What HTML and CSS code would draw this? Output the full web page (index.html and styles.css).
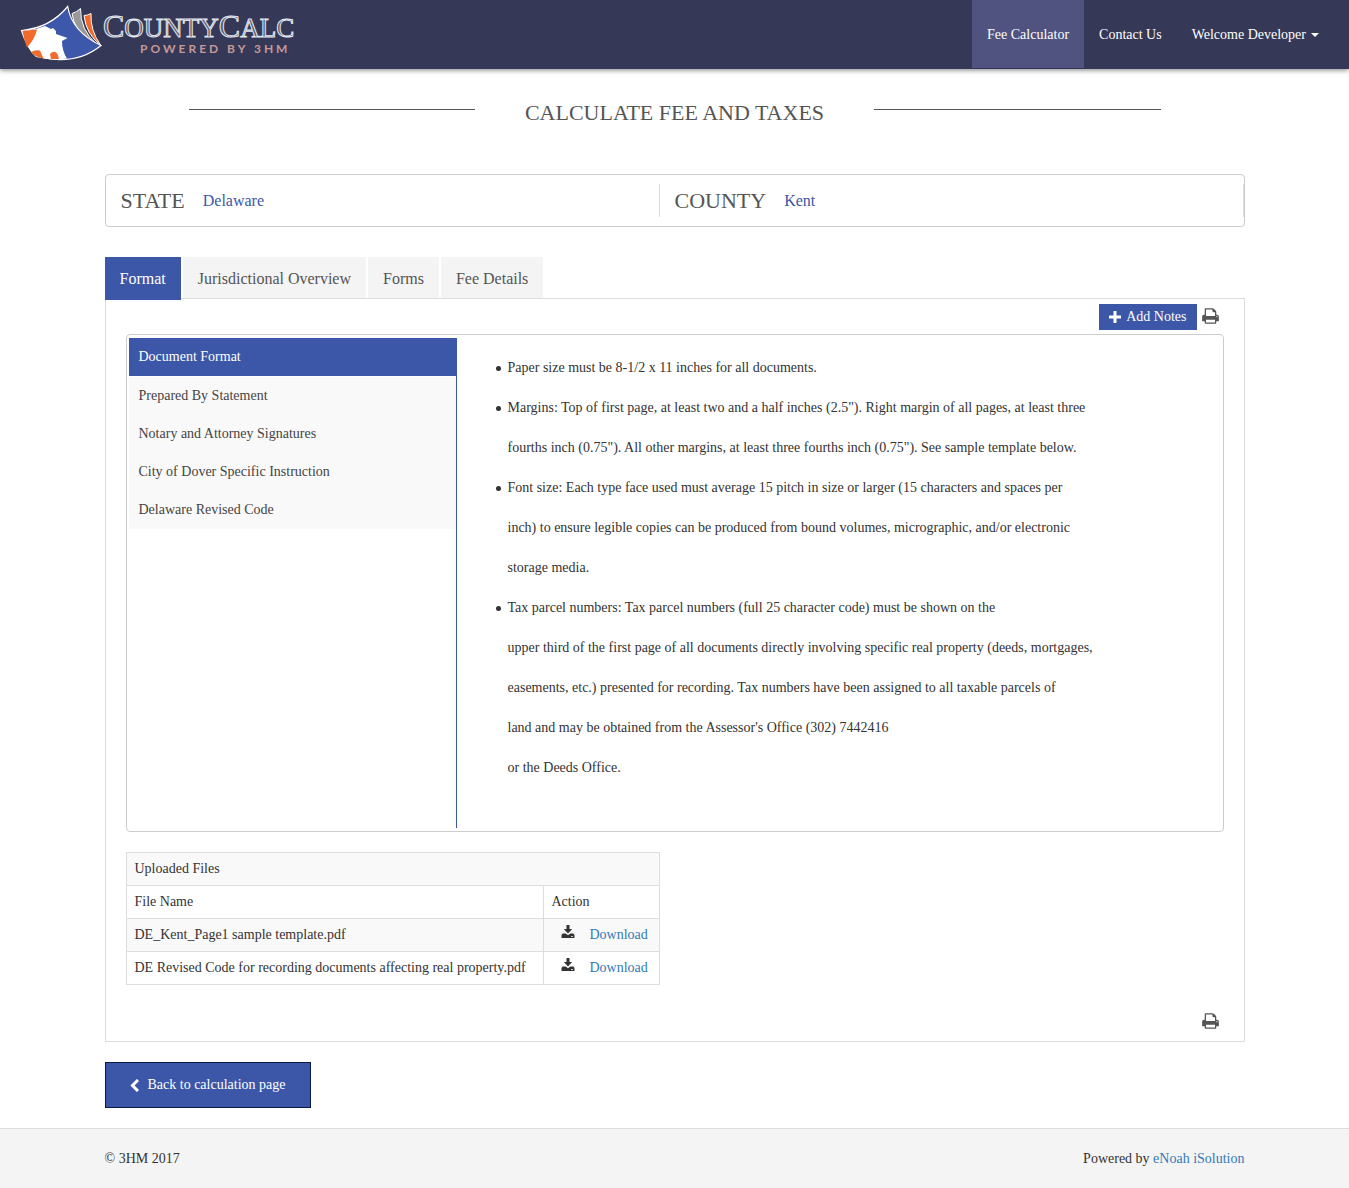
FILE: index.html
```html
<!DOCTYPE html>
<html lang="en">
<head>
<meta charset="utf-8">
<meta name="viewport" content="width=device-width, initial-scale=1">
<title>CountyCalc - Calculate Fee and Taxes</title>
<link rel="stylesheet" href="styles.css">
</head>
<body>
<svg class="sprite" aria-hidden="true">
  <symbol id="print" viewBox="0 0 1664 1792"><path d="M384 1536h896v-256h-896v256zM384 896h896v-384h-160q-40 0-68-28t-28-68v-160h-640v640zM1536 960q0-26-19-45t-45-19-45 19-19 45 19 45 45 19 45-19 19-45zM1664 960v416q0 13-9.500 22.500t-22.500 9.500h-224v160q0 40-28 68t-68 28h-960q-40 0-68-28t-28-68v-160h-224q-13 0-22.500-9.500t-9.500-22.500v-416q0-79 56.500-135.500t135.500-56.500h64v-544q0-40 28-68t68-28h672q40 0 88 20t76 48l152 152q28 28 48 76t20 88v256h64q79 0 135.500 56.500t56.500 135.500z"/></symbol>
  <symbol id="download" viewBox="0 0 14 14"><path d="M5.500 0h3v4h2.700L7 8.400 2.800 4h2.700zM1.700 8.500h3L7 10.200 9.300 8.500h3L13.500 10v3H.5v-3zM10 11v.8h2V11z" fill-rule="evenodd"/></symbol>
</svg>
<header class="navbar">
  <a class="brand" href="#" aria-label="CountyCalc powered by 3HM">
    <svg class="logo" viewBox="12 0 284 68" role="img" aria-label="CountyCalc">
      <path d="M84 15.500Q87.500 15.500 91 13.500Q90 30 100.500 45Q86 34 84 15.500z" fill="#f26a2c" stroke="#fff"/>
      <path d="M72 13.500Q77 12 80.500 8.500Q80 30 97 44.500L90 41Q74 30 72 13.500z" fill="#999" stroke="#fff"/>
      <path d="M21.500 30.500Q50 28 67.700 6.500Q72 32 101 45.500Q82 61 56 59.500Q30 59 21.500 30.500z" fill="#3d57aa" stroke="#fff" stroke-width="1.200"/>
      <path d="M36 29L45 26L51 29L53 28L56 31V34L67.500 38L62 41Q62 51 67 58.500Q50 61 36 57Q27 50 22 31z" fill="#fff"/>
      <path d="M22.500 31L37 29.500Q35 39 27 47.500Q24 40 22.500 31zM31 52Q35 49.500 40 50.500L43.500 58.500Q35 57 31 52zM50 54Q55 49 58 55L59 59H51z" fill="#f26a2c"/>
      <g class="wordmark"><text x="103" y="37"><tspan class="cap">C</tspan>OUNTY<tspan class="cap">C</tspan>ALC</text></g>
      <text class="tagline" x="140" y="53">POWERED BY 3HM</text>
    </svg>
  </a>
  <nav class="menu">
    <a class="active" href="#">Fee Calculator</a>
    <a href="#">Contact Us</a>
    <a href="#">Welcome Developer<span class="caret"></span></a>
  </nav>
</header>

<main class="container">
  <h1 class="title"><span>CALCULATE FEE AND TAXES</span></h1>

  <section class="place">
    <div class="place-item"><span class="place-label">STATE</span><span class="place-value">Delaware</span></div>
    <div class="place-item"><span class="place-label">COUNTY</span><span class="place-value">Kent</span></div>
  </section>

  <nav class="tabs">
    <a class="active" href="#">Format</a>
    <a href="#">Jurisdictional Overview</a>
    <a href="#">Forms</a>
    <a href="#">Fee Details</a>
  </nav>

  <section class="panel">
    <div class="tools">
      <button class="add" type="button"><svg class="plus" viewBox="0 0 12 12" aria-hidden="true"><path d="M4.500 0h3v4.500H12v3H7.500V12h-3V7.500H0v-3h4.500z"/></svg>Add Notes</button>
      <button class="print" type="button" aria-label="Print"><svg><use href="#print"/></svg></button>
    </div>

    <div class="sheet">
      <nav class="side">
        <a class="active" href="#">Document Format</a>
        <a href="#">Prepared By Statement</a>
        <a href="#">Notary and Attorney Signatures</a>
        <a href="#">City of Dover Specific Instruction</a>
        <a href="#">Delaware Revised Code</a>
      </nav>
      <ul class="rules">
        <li>Paper size must be 8-1/2 x 11 inches for all documents.</li>
        <li>Margins: Top of first page, at least two and a half inches (2.5"). Right margin of all pages, at least three<br>fourths inch (0.75"). All other margins, at least three fourths inch (0.75"). See sample template below.</li>
        <li>Font size: Each type face used must average 15 pitch in size or larger (15 characters and spaces per<br>inch) to ensure legible copies can be produced from bound volumes, micrographic, and/or electronic<br>storage media.</li>
        <li>Tax parcel numbers: Tax parcel numbers (full 25 character code) must be shown on the<br>upper third of the first page of all documents directly involving specific real property (deeds, mortgages,<br>easements, etc.) presented for recording. Tax numbers have been assigned to all taxable parcels of<br>land and may be obtained from the Assessor's Office (302) 7442416<br>or the Deeds Office.</li>
      </ul>
    </div>

    <table class="files">
      <thead>
        <tr><th colspan="2">Uploaded Files</th></tr>
        <tr><th>File Name</th><th>Action</th></tr>
      </thead>
      <tbody>
        <tr><td>DE_Kent_Page1 sample template.pdf</td><td class="action"><svg><use href="#download"/></svg><a href="#">Download</a></td></tr>
        <tr><td>DE Revised Code for recording documents affecting real property.pdf</td><td class="action"><svg><use href="#download"/></svg><a href="#">Download</a></td></tr>
      </tbody>
    </table>

    <div class="tools">
      <button class="print" type="button" aria-label="Print"><svg><use href="#print"/></svg></button>
    </div>
  </section>

  <button class="back" type="button"><svg viewBox="0 0 9 13" aria-hidden="true"><path d="M8 1L2.500 6.500 8 12" fill="none" stroke="#fff" stroke-width="3"/></svg>Back to calculation page</button>
</main>

<footer class="footer">
  <div class="container footer-row">
    <span>© 3HM 2017</span>
    <span>Powered by <a href="#">eNoah iSolution</a></span>
  </div>
</footer>
</body>
</html>
```
FILE: styles.css
```css
* { box-sizing: border-box; }
body {
  margin: 0;
  min-height: 100vh;
  display: flex;
  flex-direction: column;
  font: 14px/20px "Liberation Serif", "Times New Roman", serif;
  color: #333;
  background: #fff;
}
a { color: #337ab7; text-decoration: none; }
button { font: inherit; cursor: pointer; }
.sprite { position: absolute; width: 0; height: 0; }

.navbar {
  display: flex;
  justify-content: space-between;
  height: 69px;
  padding: 0 15px 1px 12px;
  background: #353856;
  box-shadow: 0 1px 5px rgba(0, 0, 0, .5);
}
.logo { display: block; width: 284px; height: 68px; }
.wordmark {
  font-size: 27px;
  fill: #555b74;
  stroke: #e4e8ef;
  stroke-width: 1;
}
.cap { font-size: 32px; }
.tagline {
  font: bold 12px "Lato", sans-serif;
  letter-spacing: 3px;
  fill: #c49a98;
}
.menu { display: flex; }
.menu a {
  display: flex;
  align-items: center;
  padding: 1px 15px 0;
  color: #fff;
}
.menu .active { background: #50537f; }
.caret {
  margin-left: 5px;
  border: 4px solid transparent;
  border-top-color: #fff;
  border-bottom: 0;
}

.container {
  width: 100%;
  max-width: 1140px;
  margin: 0 auto;
}
.title {
  display: flex;
  gap: 50px;
  margin: 30px 84px 47px;
  font-size: 22px;
  line-height: 28px;
  font-weight: normal;
  color: #555;
}
.title::before, .title::after {
  content: "";
  flex: 1;
  height: 10px;
  border-bottom: 1px solid #555;
}

.place {
  display: grid;
  grid-template-columns: 554px 1fr;
  padding: 9px 0;
  border: 1px solid #ccc;
  border-radius: 4px;
}
.place-item {
  display: flex;
  align-items: center;
  gap: 18px;
  height: 33px;
  padding-left: 15px;
  border-right: 1px solid #ddd;
}
.place-label { font-size: 22px; color: #555; }
.place-value { font-size: 16px; color: #3c57a8; }

.tabs {
  display: flex;
  align-items: flex-start;
  gap: 2px;
  height: 41px;
  margin-top: 30px;
}
.tabs a {
  padding: 12px 15px 9px;
  font-size: 16px;
  color: #555;
  background: #f4f4f4;
}
.tabs .active {
  position: relative;
  padding-bottom: 11px;
  color: #fff;
  background: #3c57a8;
}

.panel {
  padding: 5px 20px 9px;
  border: 1px solid #ddd;
}
.tools {
  display: flex;
  justify-content: flex-end;
  align-items: center;
  gap: 5px;
  padding-right: 5px;
}
.add {
  display: flex;
  align-items: center;
  gap: 5px;
  height: 26px;
  padding: 0 10px;
  border: 0;
  color: #fff;
  background: #3c57a8;
}
.plus { width: 12px; height: 12px; fill: #fff; }
.print { padding: 0 0 2px; border: 0; background: none; }
.print svg { display: block; width: 17px; height: 18px; fill: #555; }

.sheet {
  display: flex;
  min-height: 498px;
  margin: 4px 0 20px;
  padding: 3px 2px;
  border: 1px solid #ccc;
  border-radius: 4px;
}
.side {
  width: 328px;
  flex: none;
  border-right: 1px solid #3c57a8;
}
.side a {
  display: block;
  padding: 9px 10px;
  color: #444;
  background: #f9f9f9;
}
.side .active { margin-bottom: 1px; color: #fff; background: #3c57a8; }
.rules {
  margin: 10px 0;
  padding-left: 51px;
  line-height: 40px;
  list-style: none;
}
.rules li::before {
  content: "";
  display: inline-block;
  width: 5px;
  height: 5px;
  margin: 0 7px 1px -12px;
  border-radius: 50%;
  background: #333;
}

.files { border-collapse: collapse; width: 534px; }
.files th, .files td {
  padding: 6px 8px;
  border: 1px solid #ddd;
  font-weight: normal;
  text-align: left;
}
.files th:nth-child(2) { width: 116px; }
.files tr:nth-child(odd) { background: #f9f9f9; }
.action svg { width: 14px; height: 14px; margin: 0 15px 0 9px; fill: #333; }
.files + .tools { margin-top: 27px; }

.back {
  display: flex;
  align-items: center;
  gap: 9px;
  height: 46px;
  margin: 20px 0;
  padding: 0 24px;
  border: 1px solid #0b1b3d;
  color: #fff;
  background: #3c57a8;
}
.back svg { width: 9px; height: 13px; }

.footer {
  flex: 1;
  border-top: 1px solid #ddd;
  background: #f4f4f4;
}
.footer-row {
  display: flex;
  justify-content: space-between;
  padding: 20px 0 19px;
}
```
